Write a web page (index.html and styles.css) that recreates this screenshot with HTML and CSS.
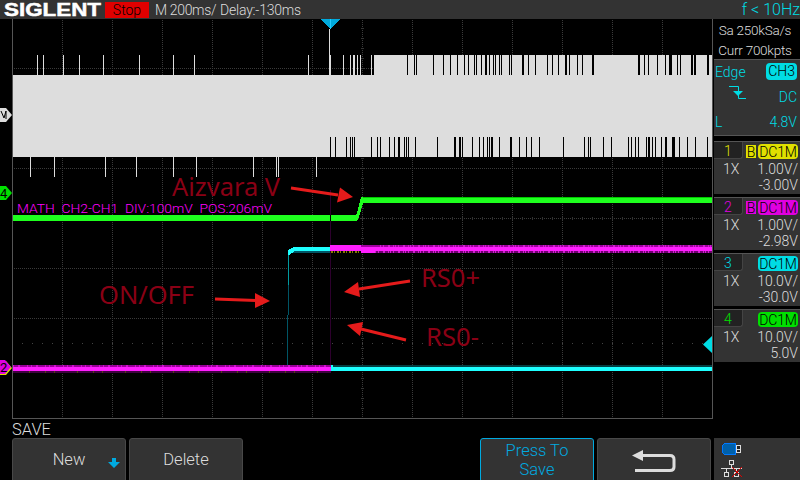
FILE: index.html
```
<!DOCTYPE html>
<html lang="en">
<head>
<meta charset="utf-8">
<title>SIGLENT</title>
<link rel="stylesheet" href="styles.css">
</head>
<body>
<div class="scope">
  <header class="topbar">
    <svg class="logo" width="105" height="19"><text x="4" y="16" textLength="97" lengthAdjust="spacingAndGlyphs">SIGLENT</text></svg>
    <span class="stop">Stop</span>
    <span class="timebase">M 200ms/</span>
    <span class="delay">Delay:-130ms</span>
    <span class="freq">f &lt; 10Hz</span>
  </header>
  <div class="middle">
    <svg class="plot" width="712" height="400" viewBox="0 19 712 400" shape-rendering="crispEdges">
      <g id="grid"></g>
      <path class="frame" d="M12.5 19V418.5H712"/>
      <path class="white" d="M13 75H712V157H13zM374 55H712V75H374zM329 29h1v46h-1zM330 55h1v20h-1z"/>
      <g id="ticks"></g>
      <path fill="#00aadd" d="M321 19H340L331 29H330z"/><path fill="#22ccff" d="M330 19h1v10h-1z"/>
      <text class="math" x="17" y="213" textLength="255" lengthAdjust="spacingAndGlyphs" xml:space="preserve">MATH  CH2-CH1  DIV:100mV  POS:206mV</text>
      <path class="purple" d="M330 190h1v176h-1z"/>
      <path class="green" d="M13 215H356L357 213L361 197H712V203H363L359 217L357 221H13z"/>
      <path fill="#00c800" d="M363 197H712V198H363z"/>
      <path fill="#000" d="M330 215h1v6h-1z"/>
      <path fill="#056" d="M288 255h1v60h-1zM287 315h1v50h-1zM292 251h38v2h-38z"/>
      <path fill="#009aa0" d="M288 255h1v30h-1z"/>
      <path class="cyan" d="M288 255V251L289 249H290L294 247H330V251H294V252L291 253L290 255z"/>
      <path fill="#a000a0" d="M361 245H712V247H361z"/>
      <path class="mag" d="M330 245h31v2h14v0H712V251H375v2H361v-2H330z"/>
      <path fill="#700070" d="M375 251H712V253H375z"/>
      <path stroke="#d020d0" stroke-width="2" stroke-dasharray="1 2 1 4 2 3 1 1" d="M375 252H712M380 246H712"/>
      <path stroke="#8a7a00" stroke-width="2" stroke-dasharray="2 1 1 2" d="M331 252h30"/>
      <path fill="#980098" d="M13 365H331V367H13z"/>
      <path stroke="#d010d0" stroke-width="2" stroke-dasharray="1 4 2 7 1 3" d="M13 366H331"/>
      <path class="mag" d="M13 367H331V371H13z"/>
      <path fill="#400040" d="M13 371H331V373H13z"/>
      <path stroke="#554411" stroke-width="2" stroke-dasharray="1 15 1 8 1 22" d="M29 372H331"/>
      <path fill="#033f42" d="M332 365H712V367H332z"/>
      <path class="cyan" d="M331 367H712V371H331zM331 365h2v2h-2z"/>
      <g shape-rendering="auto">
        <path class="white" d="M0 108H6L12 115L6 122H0z"/><path d="M1 111L4 118L6 111V119" fill="none" stroke="#000"/>
        <path fill="#00e000" d="M0 186H6L12 193L6 200H0z"/><text class="marker" x="0" y="198">4</text>
        <path fill="#e0e000" d="M0 361H6L12 368L6 375H0z"/><path fill="#e000e0" d="M0 360H5L11 367L5 374H0z"/><text class="marker" x="0" y="372">2</text>
        <path fill="#00dce4" d="M703 344.5L712 336V353z"/>
        <g class="notes">
          <text x="172" y="196" textLength="108" lengthAdjust="spacingAndGlyphs">Aizvara V</text>
          <text x="99" y="304" textLength="95" lengthAdjust="spacingAndGlyphs">ON/OFF</text>
          <text x="421" y="287" textLength="59" lengthAdjust="spacingAndGlyphs">RS0+</text>
          <text x="426" y="346" textLength="53" lengthAdjust="spacingAndGlyphs">RS0-</text>
        </g>
        <path class="shaft" d="M291 188L338 195M215 299L256 300.500M410 281L359 289M406 340L361 329"/>
        <path fill="#e51b1b" d="M340 187.500L353 197L337 202.500zM255 293L270 301L255 308zM358 282L344 292L360 297zM363 322L347 325L360 336z"/>
      </g>
    </svg>
    <aside class="side">
      <section class="acq"><div>Sa 250kSa/s</div><div>Curr 700kpts</div></section>
      <section class="trig">
        <div class="row"><span class="edge">Edge</span><span class="pill ch3">CH3</span></div>
        <div class="row"><svg class="slope" width="18" height="14"><path d="M0 .5H9.500V12.500H17" fill="none" stroke="#00dce4"/><path d="M4 5H14L9 10z" fill="#00dce4"/></svg><span>DC</span></div>
        <div class="row"><span>L</span><span>4.8V</span></div>
      </section>
      <section class="chan c1"><div class="head"><b class="num">1</b><i class="bw">B</i><span class="pill">DC1M</span></div><div class="row"><span>1X</span><span>1.00V/</span></div><div class="row end">-3.00V</div></section>
      <section class="chan c2"><div class="head"><b class="num">2</b><i class="bw">B</i><span class="pill">DC1M</span></div><div class="row"><span>1X</span><span>1.00V/</span></div><div class="row end">-2.98V</div></section>
      <section class="chan c3"><div class="head"><b class="num">3</b><span class="pill">DC1M</span></div><div class="row"><span>1X</span><span>10.0V/</span></div><div class="row end">-30.0V</div></section>
      <section class="chan c4"><div class="head"><b class="num">4</b><span class="pill">DC1M</span></div><div class="row"><span>1X</span><span>10.0V/</span></div><div class="row end">5.0V</div></section>
    </aside>
  </div>
  <footer class="bottom">
    <div class="title">SAVE</div>
    <div class="menu">
      <div class="btn"><span>New</span><svg class="down" width="12" height="10"><path d="M4 0H8V4H12L6 10L0 4H4z" fill="#00aae0"/></svg></div>
      <div class="btn"><span>Delete</span></div>
      <div class="btn active">Press To<br>Save</div>
      <div class="btn"><svg width="112" height="42"><path d="M44 15.500H72Q76 15.500 76 19.500V27Q76 30.500 72 30.500H37" fill="none" stroke="#ddd" stroke-width="3"/><path d="M34 15.500L45 10V21z" fill="#ddd"/></svg></div>
      <div class="status">
        <svg width="86" height="42" shape-rendering="crispEdges">
          <path d="M10.500 5.500H21V16.500H10.500L8.500 14.500V7.500z" fill="#0060aa" stroke="#0078ff"/><path d="M22.500 7.500H26.500V14.500H22.500z" fill="#222" stroke="#ddd"/><path d="M23 11h4" stroke="#ddd"/>
          <path d="M15.500 22.500h4v4h-4zM10.500 34.500h4v4h-4zM20.500 34.500h4v4h-4zM17.500 27v3.500M7 30.500H28M12.500 31v3M22.500 31v3" fill="none" stroke="#ddd"/>
          <path d="M18 29L28 39M28 29L18 39" stroke="#d00"/>
        </svg>
      </div>
    </div>
  </footer>
</div>
<script src="plot.js"></script>
</body>
</html>
```
FILE: styles.css
```
* { box-sizing: border-box; }
body { margin: 0; background: #000; }
.scope { width: 800px; height: 480px; overflow: hidden; background: #000; color: #ddd; font: 300 14px/16px Roboto, "Liberation Sans", sans-serif; }
.topbar { display: flex; align-items: center; height: 19px; background: #333; white-space: pre; }
.logo { flex: none; }
.logo text { font: bold 19px "Liberation Sans", sans-serif; fill: #fff; stroke: #fff; stroke-width: .5; }
.stop { width: 44px; height: 16px; margin-right: 6px; background: #e00000; color: #000; text-align: center; line-height: 17px; }
.timebase { width: 65px; letter-spacing: -.35px; }
.delay { width: 120px; letter-spacing: -.2px; }
.freq { margin-left: auto; color: #00dce4; font-size: 16px; }
.middle { display: flex; height: 400px; }
.plot { flex: none; }
.frame { fill: none; stroke: #555; }
.dots { stroke: #3a3a3a; stroke-dasharray: 1 1; }
.sparse { stroke: #444; stroke-dasharray: 1 9; }
.tick { stroke: #333; }
.white { fill: #ddd; }
.black { fill: #000; }
.green { fill: #1eff1e; }
.cyan { fill: #1effff; }
.mag { fill: #ff1eff; }
.purple { fill: #2d002d; }
.math { font: 300 13px Roboto, sans-serif; fill: #ff00ff; white-space: pre; }
.marker { font: 13px Roboto, sans-serif; fill: #000; }
.notes { font: 25px "Noto Sans", sans-serif; fill: #8a0015; }
.shaft { fill: none; stroke: #e51b1b; stroke-width: 3; }
.side { width: 88px; border-left: 1px solid #555; padding-left: 1px; }
.acq { height: 41px; padding: 1px 4px 0 0; border-bottom: 1px solid #555; text-align: center; line-height: 20px; letter-spacing: -.25px; font-size: 13.5px; white-space: nowrap; }
.trig { height: 76px; margin-bottom: 5px; padding: 3px 3px 0 1px; background: #333; color: #00dce4; border-bottom: 1px solid #555; }
.trig .row { height: 25px; padding: 0; align-items: center; }
.row { display: flex; justify-content: space-between; height: 16px; padding: 0 2px 0 9px; }
.trig .row:first-child { height: 17px; margin-bottom: 4px; }
.slope { margin: -8px 0 0 14px; }
.pill { height: 15px; padding: 0 2px; border-radius: 4px; color: #000; line-height: 16px; }
.trig .pill { height: 17px; width: 31px; line-height: 17px; text-align: right; padding-right: 2px; background: #00dce4; }
.chan { height: 53px; margin-bottom: 3px; background: #333; border-top: 1px solid #555; }
.head { display: flex; height: 19px; align-items: flex-start; padding-right: 2px; }
.num { width: 29px; height: 17px; margin-right: auto; background: #222; border: solid #444; border-width: 0 1px 1px 0; border-radius: 0 0 3px 0; text-align: center; line-height: 18px; font-weight: 300; }
.bw { width: 10px; height: 13px; margin: 3px 2px 0 0; color: #000; text-align: center; font-style: normal; font-size: 14px; line-height: 14px; }
.head .pill { margin-top: 2px; width: 40px; text-align: center; padding: 0; letter-spacing: -.2px; }
.end { justify-content: flex-end; }
.c1 .num { color: #e0e000; } .c1 .bw, .c1 .pill { background: #e0e000; }
.c2 .num { color: #e000e0; } .c2 .bw, .c2 .pill { background: #e000e0; }
.c3 .num { color: #00dce4; } .c3 .pill { background: #00dce4; }
.c4 .num { color: #00e000; } .c4 .pill { background: #00e000; }
.bottom { height: 61px; font-size: 16.5px; }
.title { height: 19px; padding-left: 12px; line-height: 21px; }
.menu { display: grid; grid-template-columns: 114px 114px 231px 114px 114px 86px; height: 42px; padding-left: 12px; column-gap: 3px; }
.btn { position: relative; display: flex; align-items: center; justify-content: center; border: 1px solid #484848; border-radius: 3px; background: #333; text-align: center; line-height: 19px; }
.btn span { margin-bottom: 3px; }
.active { grid-column: 4; padding-bottom: 2px; color: #00aae0; border-color: #00aae0; }
.status { background: #333; }
.down { position: absolute; right: 5px; bottom: 14px; }
```
FILE: plot.js
```
const NS = "http://www.w3.org/2000/svg";
function path(parent, cls, d) {
  const p = document.createElementNS(NS, "path");
  p.setAttribute("class", cls);
  p.setAttribute("d", d);
  document.getElementById(parent).appendChild(p);
}
let d = "";
for (let x = 62.5; x < 712; x += 50) d += `M${x} 20V418`;
for (let y = 68.5; y < 418; y += 50) d += `M14 ${y}H712`;
path("grid", "dots", d);
path("grid", "sparse", "M22 343.5H712");
d = "";
for (let y = 28.5; y < 418; y += 10) d += `M361 ${y}h3`;
for (let x = 22.5; x < 712; x += 10) d += `M${x} 217v3`;
path("grid", "tick", d);

// Each entry is an x position, or [x, width].
const bars = (list, y) => list.map(e => {
  const [x, w] = Array.isArray(e) ? e : [e, 1];
  return `M${x} ${y}h${w}v20h${-w}z`;
}).join("");
path("ticks", "white", bars([37, 43, 63, 79, 103, 139, 173, 194, 308, 343, 350, [353, 2], 357, 360, 371], 55));
path("ticks", "white", bars([30, 54, 105, 136, 173, 196, 253, 276, 278, 316], 157));
path("ticks", "black", bars([407, 414, 416, 433, 443, 450, 457, 464, 468, 474, 476, 481, [485, 2], 489, 493, 495, 499, 501, 509, 511, [522, 2], 528, 535, 547, 552, 558, [565, 2], 569, 577, 582, [592, 2], [638, 2], 644, 648, 657, 665, [669, 3], 677, 680, [691, 2], [694, 2], [707, 2]], 55));
path("ticks", "black", bars([330, 335, 346, 350, 352, 354, 371, 377, 380, 389, 394, [398, 2], 404, 406, 408, 415, 437, [454, 2], [459, 2], 462, 472, 479, 483, 487, 489, [491, 2], 499, [510, 2], 519, 526, 531, 539, 563, 584, 588, 590, 603, 611, 628, 631, 635, 638, 646, [648, 2], 652, 655, 661, [665, 2], [672, 3], 679, 687, 695, 707], 137));
```
